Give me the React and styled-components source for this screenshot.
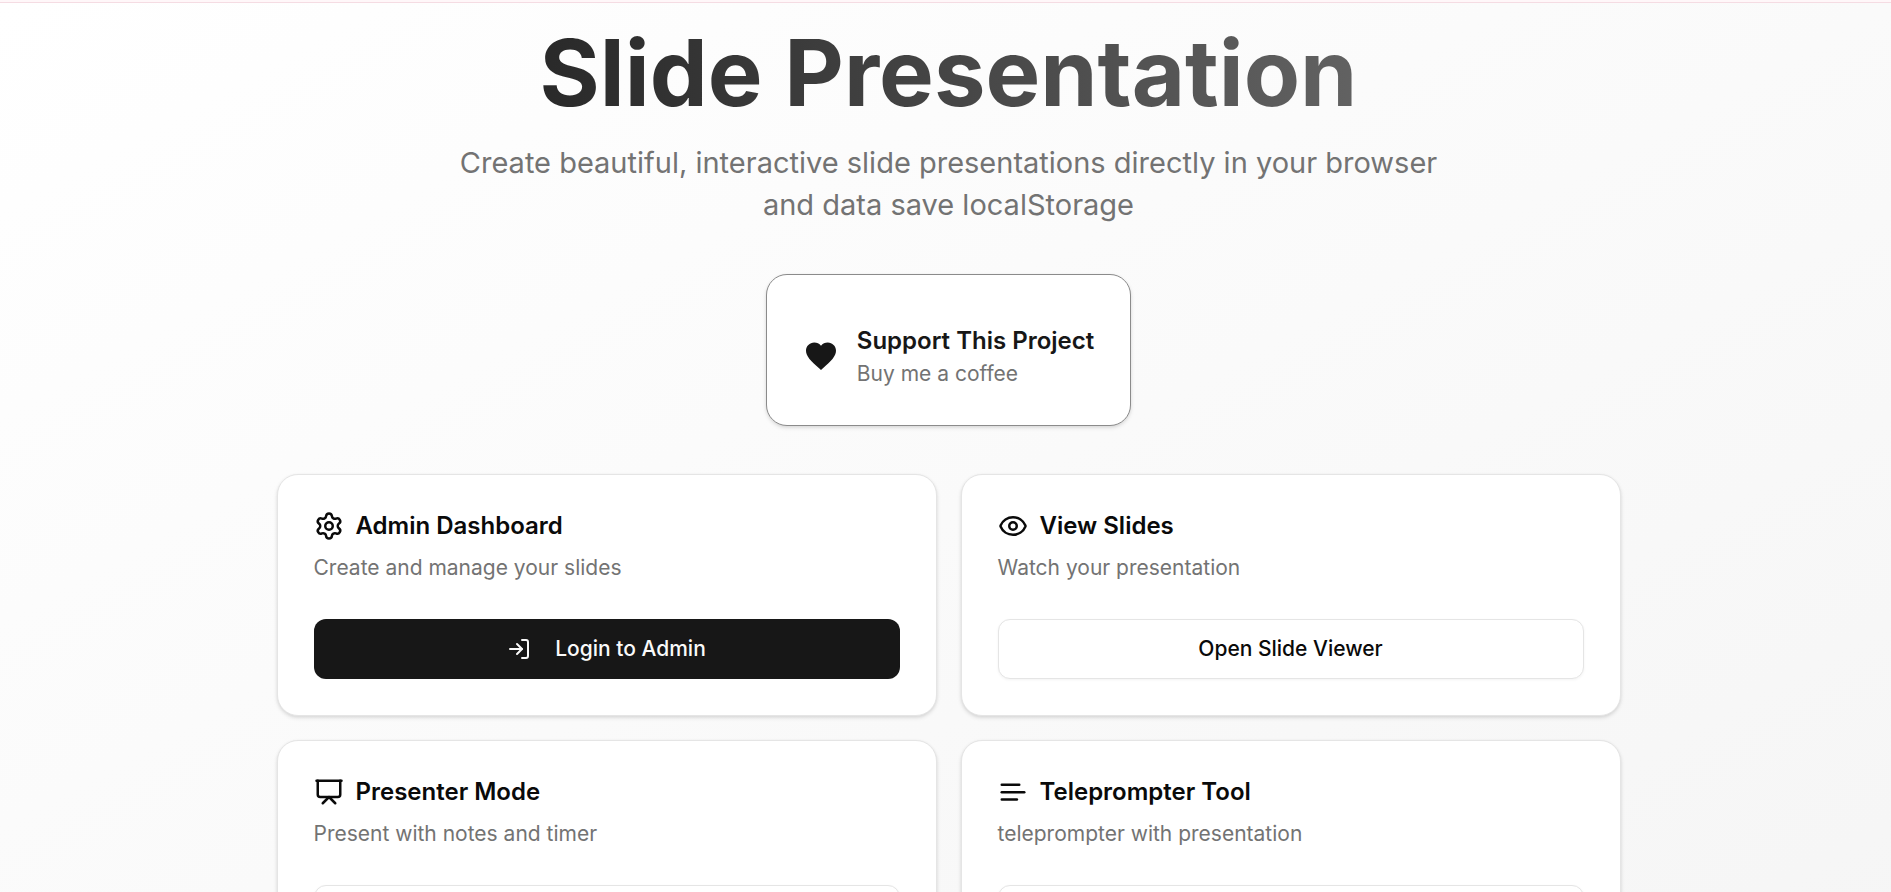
import React from 'react';
import styled, { createGlobalStyle, css } from 'styled-components';
import { Settings, Eye, Presentation, LogIn } from 'lucide-react';
import { MdFavorite } from 'react-icons/md';

const GlobalStyle = createGlobalStyle`
  *, *::before, *::after { box-sizing: border-box; }
  body {
    margin: 0;
    font-family: Inter, "Liberation Sans", sans-serif;
    color: #0a0a0a;
    background: #fafafa;
  }
  h1, h2, p { margin: 0; }
`;

const TopBar = styled.div`
  height: 3px;
  background: #fff7f9;
  border-bottom: 1px solid #f5dce3;
`;

const Page = styled.div`
  min-height: 100vh;
  background: linear-gradient(to bottom right, #ffffff, #f5f5f5);
  padding: 24px 48px 48px 54px;
`;

const Content = styled.main`
  max-width: 1344px;
  margin: 0 auto;
  display: flex;
  flex-direction: column;
  align-items: center;
  gap: 48px;
`;

const Hero = styled.header`
  width: 100%;
  display: flex;
  flex-direction: column;
  align-items: center;
  gap: 24px;
  text-align: center;
`;

const Title = styled.h1`
  width: 100%;
  font-size: 92px;
  line-height: 91px;
  font-weight: 700;
  color: transparent;
  background: linear-gradient(to right, #171717, #747474);
  -webkit-background-clip: text;
  background-clip: text;
`;

const Subtitle = styled.p`
  max-width: 1008px;
  font-size: 29px;
  line-height: 42px;
  color: #737373;
`;

const surface = css`
  background: #ffffff;
  border: 1px solid #e5e5e5;
  border-radius: 21px;
  box-shadow: 0 2px 4px rgba(0, 0, 0, 0.1), 0 1px 3px rgba(0, 0, 0, 0.06);
`;

const SupportCard = styled.a`
  ${surface}
  border-color: #8b8b8b;
  display: flex;
  align-items: center;
  gap: 18px;
  padding: 48px 36px 36px;
  color: #171717;
  text-decoration: none;
`;

const SupportTitle = styled.p`
  font-size: 24px;
  line-height: 36px;
  font-weight: 600;
`;

const Description = styled.p`
  font-size: 21px;
  line-height: 30px;
  color: #737373;
`;

const Grid = styled.section`
  width: 100%;
  display: grid;
  grid-template-columns: repeat(2, minmax(0, 1fr));
  gap: 24px;
`;

const Card = styled.article`
  ${surface}
  padding: 36px;
  display: flex;
  flex-direction: column;
  gap: 36px;
`;

const CardHeader = styled.div`
  display: flex;
  flex-direction: column;
  gap: 12px;
`;

const CardTitle = styled.h2`
  display: flex;
  align-items: center;
  gap: 12px;
  font-size: 24px;
  line-height: 30px;
  font-weight: 600;
`;

const Button = styled.button`
  height: 60px;
  display: flex;
  align-items: center;
  justify-content: center;
  gap: 24px;
  border-radius: 12px;
  font-family: inherit;
  font-size: 21px;
  line-height: 30px;
  font-weight: 500;
  cursor: pointer;
  ${({ $primary }) =>
    $primary
      ? css`
          color: #fafafa;
          background: #171717;
          border: 0;
        `
      : css`
          color: #0a0a0a;
          background: #ffffff;
          border: 1px solid #e5e5e5;
          box-shadow: 0 1px 3px rgba(0, 0, 0, 0.05);
        `}
`;

const TextLinesIcon = ({ size }) => (
  <svg
    width={size}
    height={size}
    viewBox="0 0 24 24"
    fill="none"
    stroke="currentColor"
    strokeWidth="2"
    strokeLinecap="round"
    aria-hidden="true"
  >
    <path d="M17 6.1H3" />
    <path d="M21 12.1H3" />
    <path d="M15.1 18H3" />
  </svg>
);

const tools = [
  {
    icon: Settings,
    title: 'Admin Dashboard',
    text: 'Create and manage your slides',
    action: 'Login to Admin',
    actionIcon: LogIn,
    primary: true,
  },
  { icon: Eye, title: 'View Slides', text: 'Watch your presentation', action: 'Open Slide Viewer' },
  { icon: Presentation, title: 'Presenter Mode', text: 'Present with notes and timer', action: 'Open Presenter' },
  { icon: TextLinesIcon, title: 'Teleprompter Tool', text: 'teleprompter with presentation', action: 'Open Teleprompter' },
];

function ToolCard({ icon: Icon, title, text, action, actionIcon: ActionIcon, primary }) {
  return (
    <Card>
      <CardHeader>
        <CardTitle>
          <Icon size={30} />
          {title}
        </CardTitle>
        <Description>{text}</Description>
      </CardHeader>
      <Button type="button" $primary={primary}>
        {ActionIcon && <ActionIcon size={24} />}
        {action}
      </Button>
    </Card>
  );
}

export default function App() {
  return (
    <>
      <GlobalStyle />
      <TopBar />
      <Page>
        <Content>
          <Hero>
            <Title>Slide Presentation</Title>
            <Subtitle>
              Create beautiful, interactive slide presentations directly in your browser and data save localStorage
            </Subtitle>
          </Hero>
          <SupportCard href="#support">
            <MdFavorite size={36} />
            <div>
              <SupportTitle>Support This Project</SupportTitle>
              <Description>Buy me a coffee</Description>
            </div>
          </SupportCard>
          <Grid>
            {tools.map((tool) => (
              <ToolCard key={tool.title} {...tool} />
            ))}
          </Grid>
        </Content>
      </Page>
    </>
  );
}
